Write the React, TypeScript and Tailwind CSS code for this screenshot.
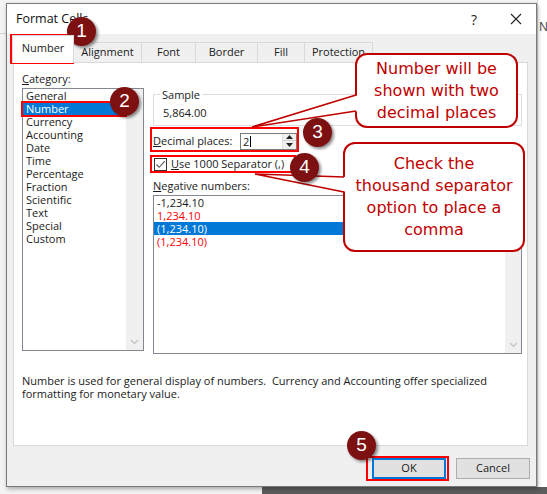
import React from 'react';

const ui = { fontFamily: '"Open Sans", "Noto Sans", sans-serif' };
const callFont = { fontFamily: '"DejaVu Sans", Lato, sans-serif' };

const categories = [
  'General',
  'Number',
  'Currency',
  'Accounting',
  'Date',
  'Time',
  'Percentage',
  'Fraction',
  'Scientific',
  'Text',
  'Special',
  'Custom',
];

function DownChevron() {
  return (
    <svg width="9" height="6" viewBox="0 0 9 6" fill="none" stroke="#c2c2c2" strokeWidth="1.2">
      <path d="M1 1l3.5 3.5L8 1" />
    </svg>
  );
}

function Badge({ n, className }: { n: string; className: string }) {
  return (
    <div
      className={
        'absolute w-[29px] h-[29px] rounded-full bg-[#7d1111] text-white text-[19px] flex items-center justify-center shadow-[2px_2px_3px_rgba(0,0,0,0.45)] ' +
        className
      }
      style={{ fontFamily: '"Liberation Sans", Arial, sans-serif' }}
    >
      {n}
    </div>
  );
}

export default function App() {
  return (
    <div className="relative w-[547px] h-[494px] overflow-hidden bg-[#f3f3f3] pl-[6px] pt-[3px]" style={ui}>
      {/* Excel background bits */}
      <div className="absolute left-0 top-[33px] w-[6px] h-px bg-[#d4d4d4]" />
      <div className="absolute right-0 top-0 w-[10px] h-[487px] bg-white border-l border-[#d4d4d4]">
        <div className="text-[12px] leading-none mt-[21px] ml-[1px] text-[#444]">N</div>
      </div>
      <div className="absolute left-[262px] bottom-0 w-[285px] h-[7px] bg-[#5c5c5c]" />

      {/* Dialog */}
      <div className="relative w-[531px] h-[484px] bg-[#f0f0f0] border border-[#7a7a7a] shadow-[1px_2px_4px_rgba(0,0,0,0.3)] flex flex-col text-[11px] text-[#1a1a1a]">
        {/* Title bar */}
        <div className="h-[30px] bg-white flex items-center pl-[9px] pr-[14px]">
          <span className="text-[12.5px] text-[#111]">Format Cells</span>
          <span className="ml-auto text-[14px] text-[#222] mr-[33px]">?</span>
          <svg width="12" height="12" viewBox="0 0 12 12" stroke="#222" strokeWidth="1.1">
            <path d="M1 1l10 10M11 1L1 11" />
          </svg>
        </div>

        {/* Tabs */}
        <div className="h-[28px] flex items-end pl-[5px]">
          <div className="relative z-10 w-[62px] h-[28px] -mb-px bg-white border border-b-0 border-[#d9d9d9] flex items-center justify-center pb-[2px]">
            Number
          </div>
          <div className="w-[68px] h-[20px] border-t border-r border-[#d9d9d9] flex items-center justify-center">Alignment</div>
          <div className="w-[54px] h-[20px] border-t border-r border-[#d9d9d9] flex items-center justify-center">Font</div>
          <div className="w-[62px] h-[20px] border-t border-r border-[#d9d9d9] flex items-center justify-center">Border</div>
          <div className="w-[47px] h-[20px] border-t border-r border-[#d9d9d9] flex items-center justify-center">Fill</div>
          <div className="w-[68px] h-[20px] border-t border-r border-[#d9d9d9] flex items-center justify-center">Protection</div>
        </div>

        {/* Panel */}
        <div className="ml-[6px] w-[515px] h-[384px] bg-white border border-[#d9d9d9] pl-[8px] pt-[9px]">
          <div className="flex">
            <div className="w-[122px]">
              <div className="h-[14px] leading-[14px]">
                <span className="underline">C</span>ategory:
              </div>
              <div className="mt-[2px] h-[263px] border border-[#828790] flex">
                <div className="flex-1">
                  {categories.map((c) => (
                    <div
                      key={c}
                      className={
                        c === 'Number'
                          ? 'h-[13px] leading-[13px] pl-[3px] bg-[#0078d7] text-white'
                          : 'h-[13px] leading-[13px] pl-[3px]'
                      }
                    >
                      {c}
                    </div>
                  ))}
                </div>
                <div className="w-[17px] bg-[#f0f0f0] flex flex-col justify-end items-center pb-[5px]">
                  <DownChevron />
                </div>
              </div>
            </div>

            <div className="ml-[9px] w-[369px]">
              <fieldset className="mt-[16px] h-[38px] border border-[#dcdcdc] pl-[9px]">
                <legend className="ml-[-3px] px-[2px] leading-[13px]">Sample</legend>
                <div className="leading-[13px] mt-[5px]">5,864.00</div>
              </fieldset>

              <div className="mt-[6px] h-[18px] flex items-center">
                <span className="w-[87px]">
                  <span className="underline">D</span>ecimal places:
                </span>
                <div className="w-[57px] h-[17px] border border-[#7a7a7a] flex items-center">
                  <span className="pl-[2px] leading-none border-r border-black pr-[1px]">2</span>
                  <div className="ml-auto w-[14px] h-[15px] flex flex-col border-l border-[#e0e0e0]">
                    <div className="h-[7px] bg-[#f0f0f0] border-b border-[#d0d0d0] flex items-center justify-center">
                      <svg width="7" height="4" viewBox="0 0 7 4">
                        <path d="M0 4L3.5 0L7 4Z" fill="#222" />
                      </svg>
                    </div>
                    <div className="h-[8px] bg-[#f0f0f0] flex items-center justify-center">
                      <svg width="7" height="4" viewBox="0 0 7 4">
                        <path d="M0 0L3.5 4L7 0Z" fill="#222" />
                      </svg>
                    </div>
                  </div>
                </div>
              </div>

              <div className="mt-[7px] h-[14px] flex items-center pl-[1px]">
                <div className="w-[13px] h-[13px] border border-[#333] bg-white flex items-center justify-center">
                  <svg width="11" height="11" viewBox="0 0 11 11" fill="none" stroke="#555" strokeWidth="1.1">
                    <path d="M1.5 5.5l2.7 2.8L9.8 2.2" />
                  </svg>
                </div>
                <span className="ml-[4px]">
                  <span className="underline">U</span>se 1000 Separator (,)
                </span>
              </div>

              <div className="mt-[8px] h-[13px] leading-[13px]">
                <span className="underline">N</span>egative numbers:
              </div>
              <div className="mt-[3px] h-[159px] border border-[#828790] flex">
                <div className="flex-1">
                  <div className="h-[13px] leading-[13px] pl-[3px]">-1,234.10</div>
                  <div className="h-[13px] leading-[13px] pl-[3px] text-[#ff0000]">1,234.10</div>
                  <div className="h-[13px] leading-[13px] pl-[3px] bg-[#0078d7] text-white">(1,234.10)</div>
                  <div className="h-[13px] leading-[13px] pl-[3px] text-[#ff0000]">(1,234.10)</div>
                </div>
                <div className="w-[16px] bg-[#f0f0f0] flex flex-col justify-end items-center pb-[5px]">
                  <DownChevron />
                </div>
              </div>
            </div>
          </div>

          <div className="mt-[20px] leading-[13px] w-[490px]">
            Number is used for general display of numbers.&nbsp; Currency and Accounting offer specialized formatting for
            monetary value.
          </div>
        </div>

        {/* Buttons */}
        <div className="mt-[12px] flex justify-end gap-[10px] pr-[6px]">
          <button className="w-[74px] h-[21px] bg-[#e1e1e1] border-2 border-[#0078d7] text-[11px]">OK</button>
          <button className="w-[74px] h-[21px] bg-[#e1e1e1] border border-[#adadad] text-[11px]">Cancel</button>
        </div>
      </div>

      {/* Annotation: red highlight boxes */}
      <div className="absolute left-[10px] top-[34px] w-[64px] h-[30px] border-2 border-[#ff0000]" />
      <div className="absolute left-[21px] top-[101px] w-[106px] h-[16px] border-2 border-[#ff0000]" />
      <div className="absolute left-[150px] top-[127px] w-[149px] h-[25px] border-2 border-[#ff0000]" />
      <div className="absolute left-[150px] top-[155px] w-[146px] h-[18px] border-2 border-[#ff0000]" />
      <div className="absolute left-[366px] top-[456px] w-[83px] h-[25px] border-2 border-[#ff0000]" />

      {/* Callouts */}
      <div
        className="absolute left-[355px] top-[53px] w-[163px] h-[75px] rounded-[12px] border-2 border-[#c00000] bg-white flex items-center justify-center text-center text-[16px] leading-[22px] text-[#c00000]"
        style={callFont}
      >
        Number will be
        <br />
        shown with two
        <br />
        decimal places
      </div>
      <div
        className="absolute left-[343px] top-[142px] w-[182px] h-[110px] rounded-[12px] border-2 border-[#c00000] bg-white flex items-center justify-center text-center text-[16px] leading-[22px] text-[#c00000]"
        style={callFont}
      >
        Check the
        <br />
        thousand separator
        <br />
        option to place a
        <br />
        comma
      </div>
      <svg className="absolute left-0 top-0 pointer-events-none" width="547" height="494">
        <polygon points="252,127 359,95 359,111" fill="#ffffff" />
        <polyline points="356,95 252,127 356,111" fill="none" stroke="#c00000" strokeWidth="1.6" />
        <polygon points="255,174 347,177 347,192" fill="#ffffff" />
        <polyline points="344,177 255,174 344,192" fill="none" stroke="#c00000" strokeWidth="1.6" />
      </svg>

      {/* Badges */}
      <Badge n="1" className="left-[67px] top-[17px]" />
      <Badge n="2" className="left-[110px] top-[87px]" />
      <Badge n="3" className="left-[303px] top-[118px]" />
      <Badge n="4" className="left-[290px] top-[153px]" />
      <Badge n="5" className="left-[347px] top-[431px]" />
    </div>
  );
}
